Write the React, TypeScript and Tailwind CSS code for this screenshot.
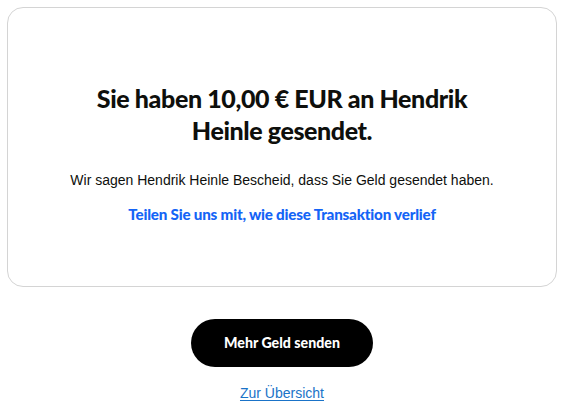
export default function App() {
  return (
    <div className="w-[565px] h-[418px] bg-white pt-[7px] pl-[7px] pr-[8px] flex flex-col items-center">
      <div className="w-full h-[280px] rounded-[16px] border border-[#d4d4d4] flex flex-col items-center pt-[74px]">
        <h1 className="text-center text-[25px] leading-[32px] font-black text-[#0e0f0c] max-w-[400px] tracking-[-0.4px] font-['Lato','Noto_Sans',sans-serif]">
          Sie haben 10,00 € EUR an Hendrik Heinle gesendet.
        </h1>
        <p className="mt-[23px] text-[14px] leading-[22px] text-[#0e0f0c] text-center font-['Liberation_Sans',Arial,sans-serif]">
          Wir sagen Hendrik Heinle Bescheid, dass Sie Geld gesendet haben.
        </p>
        <a
          href="#"
          className="mt-[12px] text-[15.2px] leading-[22px] font-black text-[#1464f6] tracking-[-0.2px] font-['Lato','Noto_Sans',sans-serif]"
        >
          Teilen Sie uns mit, wie diese Transaktion verlief
        </a>
      </div>
      <button className="mt-[32px] w-[182px] h-[48px] rounded-full bg-black text-white text-[14.2px] font-black font-['Lato','Noto_Sans',sans-serif]">
        Mehr Geld senden
      </button>
      <a
        href="#"
        className="mt-[16px] text-[14px] leading-[20px] text-[#1a73c8] underline underline-offset-2 font-['Liberation_Sans',Arial,sans-serif]"
      >
        Zur Übersicht
      </a>
    </div>
  );
}
